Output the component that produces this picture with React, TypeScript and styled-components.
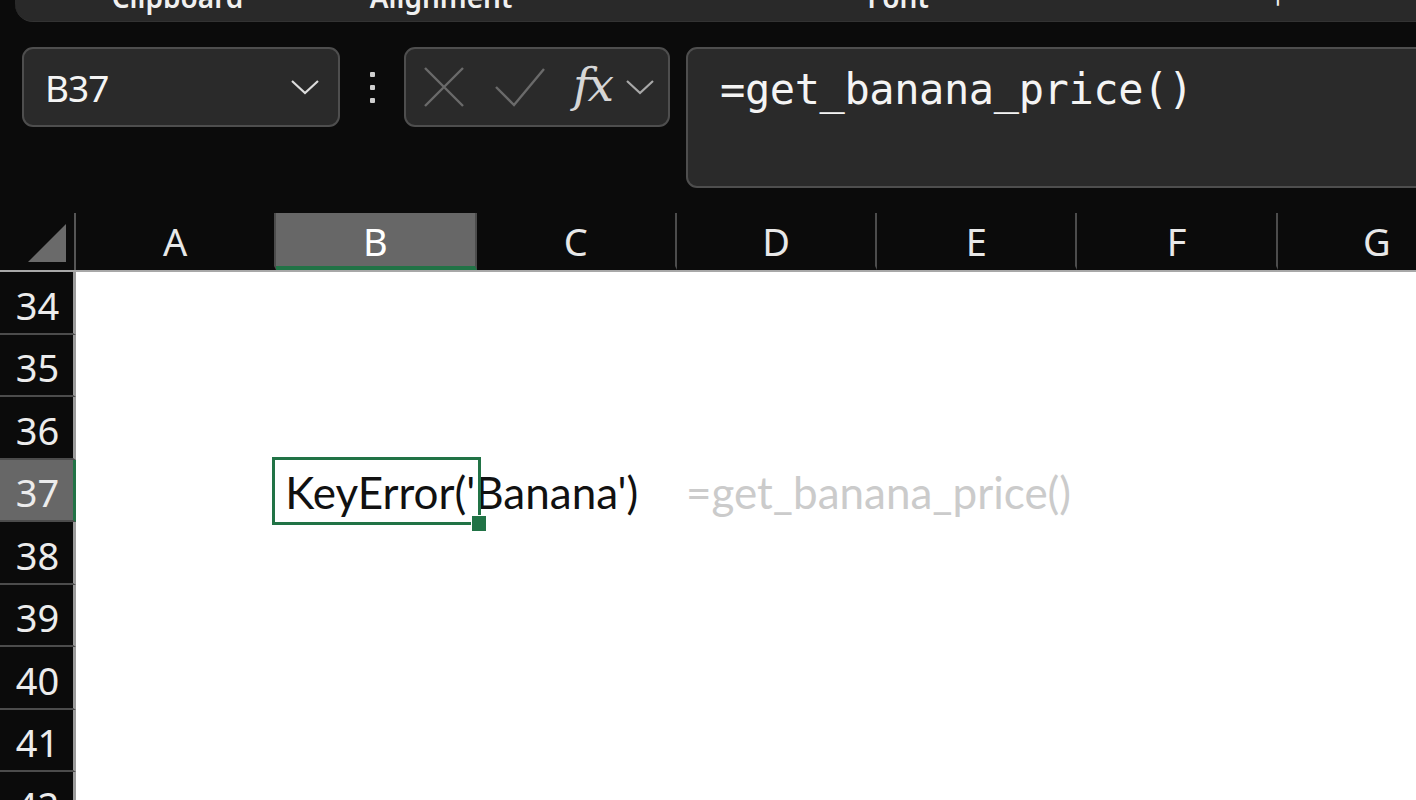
import styled, { createGlobalStyle } from 'styled-components';

const GlobalStyle = createGlobalStyle`
  html, body {
    margin: 0;
    padding: 0;
    background: #0b0b0b;
  }
`;

const COLUMNS = ['A', 'B', 'C', 'D', 'E', 'F', 'G'];
const ROWS = [34, 35, 36, 37, 38, 39, 40, 41, 42];
const ACTIVE_COL = 'B';
const ACTIVE_ROW = 37;

const Sheet = styled.div`
  width: 1416px;
  height: 800px;
  overflow: hidden;
  background: #0b0b0b;
  font-family: 'Noto Sans', 'Open Sans', sans-serif;
  display: flex;
  flex-direction: column;
`;

// only the bottom strip of the ribbon is in view, its labels are cut by the top edge
const Ribbon = styled.div`
  margin-left: 15px;
  height: 21px;
  background: #292929;
  border-bottom: 1px solid #333;
  border-bottom-left-radius: 18px;
  display: flex;
  align-items: flex-end;
  overflow: hidden;
  flex-shrink: 0;
`;

const RibbonGroup = styled.div<{ $width: number }>`
  width: ${(p) => p.$width}px;
  flex-shrink: 0;
  display: flex;
  justify-content: center;
  padding-bottom: 10px;
  font-size: 28px;
  line-height: 1;
  color: #f0f0f0;
  font-weight: 600;
  white-space: nowrap;
`;

const FormulaRow = styled.div`
  display: flex;
  align-items: flex-start;
  padding: 25px 0 0 22px;
  height: 141px;
  flex-shrink: 0;
`;

const Box = styled.div`
  box-sizing: border-box;
  flex-shrink: 0;
  background: #2a2a2a;
  border: 2px solid #4e4e4e;
  border-radius: 11px;
  display: flex;
  align-items: center;
`;

const NameBox = styled(Box)`
  width: 318px;
  height: 80px;
  padding: 0 18px 0 21px;
  justify-content: space-between;
  font-size: 37px;
  color: #f4f4f4;
  letter-spacing: -1px;
`;

const Dots = styled.div`
  width: 64px;
  height: 80px;
  flex-shrink: 0;
  display: flex;
  flex-direction: column;
  align-items: center;
  justify-content: center;
  gap: 8px;

  span {
    width: 5px;
    height: 5px;
    background: #cfcfcf;
    border-radius: 1px;
  }
`;

const FxBox = styled(Box)`
  width: 266px;
  height: 80px;
  padding: 0 6px 0 17px;
`;

const FxLabel = styled.span`
  font-family: 'DejaVu Serif', 'Liberation Serif', serif;
  font-style: italic;
  font-size: 47px;
  color: #d6d6d6;
  margin: 0 14px 6px 26px;
  letter-spacing: -3px;
  line-height: 1;
`;

const FormulaInput = styled(Box)`
  margin-left: 16px;
  width: 900px;
  height: 141px;
  align-items: flex-start;
  padding: 16px 0 0 32px;
  font-family: 'DejaVu Sans Mono', 'Liberation Mono', monospace;
  font-size: 42px;
  color: #f4f4f4;
  letter-spacing: -0.4px;
`;

const HeaderRow = styled.div`
  margin-top: 25px;
  height: 57px;
  display: flex;
  border-bottom: 2px solid #a8a8a8;
  flex-shrink: 0;
`;

const Corner = styled.div`
  width: 76px;
  flex-shrink: 0;
  border-right: 2px solid #555;
  display: flex;
  align-items: flex-end;
  justify-content: flex-end;
  padding: 0 8px 8px 0;
  box-sizing: border-box;
`;

const ColHeader = styled.div<{ $active: boolean }>`
  width: 200.3px;
  flex-shrink: 0;
  box-sizing: border-box;
  border-right: 2px solid #4c4c4c;
  background: ${(p) => (p.$active ? '#676767' : 'transparent')};
  border-bottom: 4px solid ${(p) => (p.$active ? '#217346' : 'transparent')};
  display: flex;
  align-items: center;
  justify-content: center;
  font-size: 38px;
  color: ${(p) => (p.$active ? '#ffffff' : '#e8e8e8')};
  padding-top: 2px;
`;

const Body = styled.div`
  display: flex;
  flex-direction: column;
  background: #ffffff;
`;

const Row = styled.div`
  display: flex;
  height: 62.5px;
  flex-shrink: 0;
`;

const RowHeader = styled.div<{ $active: boolean }>`
  width: 76px;
  flex-shrink: 0;
  box-sizing: border-box;
  background: ${(p) => (p.$active ? '#676767' : '#0b0b0b')};
  border-bottom: 2px solid #4c4c4c;
  border-right: 3px solid ${(p) => (p.$active ? '#217346' : '#9c9c9c')};
  display: flex;
  align-items: center;
  justify-content: center;
  font-size: 38px;
  color: #ececec;
  padding: 5px 0 0 2px;
`;

const Cell = styled.div`
  position: relative;
  width: 200.3px;
  flex-shrink: 0;
  display: flex;
  align-items: center;
  padding-left: 9px;
  box-sizing: border-box;
  white-space: nowrap;
`;

const CellText = styled.span<{ $muted?: boolean }>`
  font-family: Lato, 'Open Sans', sans-serif;
  font-size: 44px;
  color: ${(p) => (p.$muted ? '#cbcbcb' : '#111111')};
  position: relative;
  z-index: 1;
  padding-top: 3px;
`;

const Selection = styled.div`
  position: absolute;
  left: -4px;
  top: -3px;
  right: -4px;
  bottom: -3px;
  border: 3px solid #217346;
  z-index: 2;
  pointer-events: none;

  &::after {
    content: '';
    position: absolute;
    right: -9px;
    bottom: -10px;
    width: 14px;
    height: 15px;
    background: #217346;
    border: 1px solid #ffffff;
  }
`;

const Chevron = ({ color }: { color: string }) => (
  <svg width="30" height="16" viewBox="0 0 30 16" fill="none">
    <path d="M2 2 L15 14 L28 2" stroke={color} strokeWidth="2.2" />
  </svg>
);

const cellContent = (row: number, col: string) => {
  if (row !== ACTIVE_ROW) return null;
  if (col === 'B') {
    return (
      <>
        <CellText>KeyError('Banana')</CellText>
        <Selection />
      </>
    );
  }
  if (col === 'D') return <CellText $muted>=get_banana_price()</CellText>;
  return null;
};

const App = () => {
  return (
    <Sheet>
      <GlobalStyle />
      <Ribbon>
        <RibbonGroup $width={325}>Clipboard</RibbonGroup>
        <RibbonGroup $width={202}>Alignment</RibbonGroup>
        <RibbonGroup $width={712}>Font</RibbonGroup>
        <RibbonGroup $width={60}>⌐</RibbonGroup>
      </Ribbon>

      <FormulaRow>
        <NameBox>
          <span>B37</span>
          <Chevron color="#dcdcdc" />
        </NameBox>
        <Dots>
          <span />
          <span />
          <span />
        </Dots>
        <FxBox>
          <svg width="42" height="42" viewBox="0 0 42 42" fill="none">
            <path d="M2 2 L40 40 M40 2 L2 40" stroke="#6a6a6a" strokeWidth="2.4" />
          </svg>
          <svg width="54" height="44" viewBox="0 0 54 44" fill="none" style={{ marginLeft: 28 }}>
            <path d="M3 22 L21 40 L51 4" stroke="#6a6a6a" strokeWidth="2.4" />
          </svg>
          <FxLabel>fx</FxLabel>
          <Chevron color="#a8a8a8" />
        </FxBox>
        <FormulaInput>=get_banana_price()</FormulaInput>
      </FormulaRow>

      <HeaderRow>
        <Corner>
          <svg width="38" height="38" viewBox="0 0 38 38">
            <polygon points="38,0 38,38 0,38" fill="#6a6a6a" />
          </svg>
        </Corner>
        {COLUMNS.map((c) => (
          <ColHeader key={c} $active={c === ACTIVE_COL}>
            {c}
          </ColHeader>
        ))}
      </HeaderRow>

      <Body>
        {ROWS.map((r) => (
          <Row key={r}>
            <RowHeader $active={r === ACTIVE_ROW}>{r}</RowHeader>
            {COLUMNS.map((c) => (
              <Cell key={c}>{cellContent(r, c)}</Cell>
            ))}
          </Row>
        ))}
      </Body>
    </Sheet>
  );
};

export default App;
